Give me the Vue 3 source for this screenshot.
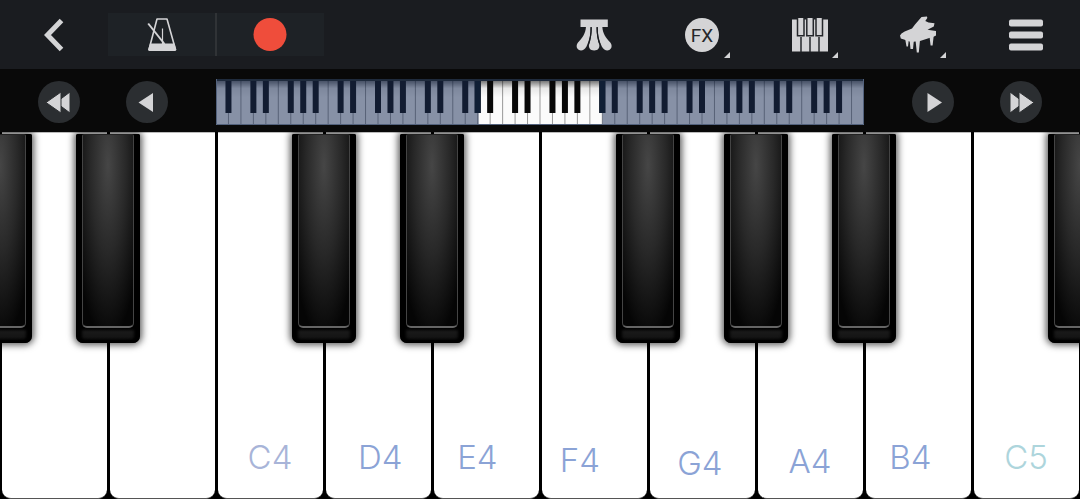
<script setup>
const blackBoundaries = [0, 1, 3, 4, 6, 7, 8, 10]

const noteLabels = [
  { text: 'C4', x: 25, y: 325, tone: 'lilac' },
  { text: 'D4', x: 35.2, y: 325, tone: 'blue' },
  { text: 'E4', x: 44.2, y: 325, tone: 'blue' },
  { text: 'F4', x: 53.7, y: 328, tone: 'blue' },
  { text: 'G4', x: 64.8, y: 331, tone: 'blue' },
  { text: 'A4', x: 75, y: 329, tone: 'blue' },
  { text: 'B4', x: 84.3, y: 325, tone: 'blue' },
  { text: 'C5', x: 95, y: 325, tone: 'mint' },
]

const whiteNames = ['A3', 'B3', 'C4', 'D4', 'E4', 'F4', 'G4', 'A4', 'B4', 'C5']

// Full 88-key overview: 52 white keys starting on A0.
const miniStep = 648 / 52
const boundaries = Array.from({ length: 51 }, (_, i) => i + 1)
const miniLines = boundaries.map((i) => i * miniStep)
const sharps = boundaries
  .filter((i) => i < 51 && [0, 1, 3, 4, 6].includes(i % 7))
  .map((i) => i * miniStep - 3)
const viewStart = 21 * miniStep
const viewEnd = 31 * miniStep
</script>

<template>
  <main class="piano">
    <header class="toolbar">
      <button class="tool" aria-label="Back">
        <svg viewBox="0 0 36 36"><path d="M25.500 3.500 11.500 18l14 14.500" fill="none" stroke="#d4d4d6" stroke-width="5" /></svg>
      </button>
      <div class="group">
        <button class="tool" aria-label="Metronome">
          <svg viewBox="0 0 36 36">
            <path d="M5 32.500 13 2h10l8.500 30.500Z" fill="none" stroke="#d4d4d6" stroke-width="1.600" stroke-linejoin="round" />
            <path d="M6 26.500h24.500l1.800 6.500-1 1H5l-1-1Z" fill="#d4d4d6" />
            <path d="M4.200 6.500 20.500 27" fill="none" stroke="#d4d4d6" stroke-width="2" />
            <path d="M18.500 11.500V27" stroke="#d4d4d6" stroke-width="1.200" />
          </svg>
        </button>
        <button class="tool" aria-label="Record">
          <svg viewBox="0 0 36 36"><circle cx="18" cy="17.500" r="16.500" fill="#ef4d3b" /></svg>
        </button>
      </div>
      <button class="tool pedal" aria-label="Sustain pedal">
        <svg viewBox="0 0 36 36" fill="#d4d4d6">
          <path d="M4.500 2.500h27.300v7.500H4.500Z" />
          <path d="M10 9.500h4.500C14.800 17 13.500 23 10.500 29.500 8.500 33.200 5.500 34 3 33 .3 31.500 0 28 2 25.500 6.500 20.500 9.500 17 10 9.500Z" />
          <path d="M26.300 9.500h-4.500c-.3 7.500 1 13.500 4 20 2 3.700 5 4.500 7.500 3.500 2.700-1.500 3-5 1-7.500-4.500-5-7.500-8.500-8-16Z" />
          <path d="M15.700 9.500h4.900c0 7.500.7 12 2.400 17 1.300 4.200-.8 7-4.850 7s-6.150-2.800-4.850-7C15 21.500 15.700 17 15.700 9.500Z" />
          <path d="M15.200 10.200c0 7-.8 11.800-2.700 17M21.100 10.200c0 7 .8 11.800 2.700 17" fill="none" stroke="#1a1c20" stroke-width="1.200" />
        </svg>
      </button>
      <button class="tool" aria-label="Effects">
        <span class="fx">FX</span><i class="corner"></i>
      </button>
      <button class="tool" aria-label="Keyboard layout">
        <svg viewBox="0 0 36 36">
          <path d="M0 2.500h36v32H0Z" fill="#d4d4d6" />
          <path d="M9 20v15M18 20v15M27 20v15" stroke="#25272b" stroke-width="1.500" />
          <g fill="#d4d4d6" stroke="#25272b" stroke-width="1.500">
            <path d="M5.500 1v17.800h6.500V1M14.800 1v17.800h6.500V1M24 1v17.800h6.500V1" />
          </g>
        </svg><i class="corner"></i>
      </button>
      <button class="tool" aria-label="Instrument">
        <svg viewBox="0 0 36 36" fill="#d4d4d6">
          <path d="M0 18.500 1.500 16.500 4.700 14.500 12 11.500 15 7.500 21.500 0 27 -.5 27.300 1 25.300 4 28.500 5.500 34.500 6.200 33.800 9.500 27.500 12.800 36 14V18.500L34 19.500 20 24 11 25 4.700 22.800 .8 21.500Z" />
          <path d="M5 21h4l-1 8.500H6.500ZM9.500 22h4.500l-1 10h-2.500ZM15.500 23h4.500l-1.200 12.500h-2ZM29.300 18h4.500l-1.200 10.500h-2Z" />
        </svg><i class="corner"></i>
      </button>
      <button class="tool" aria-label="Menu">
        <svg viewBox="0 0 36 36" fill="#d4d4d6">
          <rect x="1" y="2.500" width="34" height="7" rx="2" />
          <rect x="1" y="14.500" width="34" height="7" rx="2" />
          <rect x="1" y="26.500" width="34" height="7" rx="2" />
        </svg>
      </button>
    </header>

    <nav class="range" aria-label="Keyboard range">
      <div class="steps before">
        <button class="step" aria-label="Octave down">
          <svg viewBox="0 0 42 42" fill="#d4d4d6" stroke="#2b2e31" stroke-width="1"><path d="M32 11v21L18 21.500Z" /><path d="M23 11v21L8 21.500Z" /></svg>
        </button>
        <button class="step" aria-label="Key down">
          <svg viewBox="0 0 42 42" fill="#d4d4d6"><path d="M27 12v19L12.500 21.500Z" /></svg>
        </button>
      </div>
      <svg class="overview" viewBox="0 0 648 46" preserveAspectRatio="none" role="img" aria-label="88-key overview">
        <defs>
          <linearGradient id="miniShade" x1="0" y1="0" x2="0" y2="1">
            <stop offset="0" stop-color="#000" stop-opacity=".65" />
            <stop offset=".2" stop-color="#000" stop-opacity=".08" />
            <stop offset=".4" stop-color="#000" stop-opacity="0" />
          </linearGradient>
        </defs>
        <rect width="648" height="46" fill="#fbfbfb" />
        <rect v-for="x in miniLines" :key="'l' + x" :x="x - 0.5" y="0" width="1" height="46" fill="#999" />
        <rect width="648" height="46" fill="url(#miniShade)" />
        <rect v-for="x in sharps" :key="'s' + x" :x="x" y="1" width="6" height="33" fill="#080808" />
        <rect :width="viewStart + 1" height="46" class="veil" />
        <rect :x="viewEnd" :width="648 - viewEnd" height="46" class="veil" />
        <rect :x="viewStart - 3" y="1" width="6" height="33" fill="#101f35" />
        <rect :x="viewEnd - 3" y="1" width="6" height="33" fill="#101f35" />
        <rect width="648" height="2" fill="#1f2b3d" />
        <path d="M.5 0v45.500h647V0" fill="none" stroke="#53627d" />
      </svg>
      <div class="steps">
        <button class="step" aria-label="Key up">
          <svg viewBox="0 0 42 42" fill="#d4d4d6"><path d="M15.500 12v19L30 21.500Z" /></svg>
        </button>
        <button class="step" aria-label="Octave up">
          <svg viewBox="0 0 42 42" fill="#d4d4d6" stroke="#2b2e31" stroke-width="1"><path d="M10 11v21l14-10.500Z" /><path d="M19 11v21l15-10.500Z" /></svg>
        </button>
      </div>
    </nav>

    <section class="keyboard" aria-label="Keys">
      <button v-for="name in whiteNames" :key="name" class="white" :aria-label="name"></button>
      <button
        v-for="b in blackBoundaries"
        :key="b"
        class="black"
        :style="{ left: b * 10 + '%' }"
        aria-label="Black key"
      ><span class="face"></span></button>
      <span
        v-for="n in noteLabels"
        :key="n.text"
        class="note"
        :class="n.tone"
        :style="{ left: n.x + '%', top: n.y + 'px' }"
      >{{ n.text }}</span>
    </section>
  </main>
</template>

<style>
body {
  margin: 0;
  background: #050505;
}
</style>

<style scoped>
.piano {
  display: flex;
  flex-direction: column;
  min-height: 100vh;
  overflow: hidden;
  font-family: Inter, "Liberation Sans", sans-serif;
}
button {
  border: 0;
  padding: 0;
  margin: 0;
  background: none;
  cursor: pointer;
}
.toolbar {
  display: grid;
  grid-template-columns: repeat(10, 1fr);
  height: 69px;
  align-items: center;
  background: #1a1c20;
}
.tool {
  position: relative;
  display: flex;
  align-items: center;
  justify-content: center;
  height: 69px;
}
.tool svg {
  width: 36px;
  height: 36px;
  overflow: visible;
}
.group {
  grid-column: span 2;
  display: grid;
  grid-template-columns: 1fr 1fr;
  background: #1e2226;
}
.group .tool {
  height: 43px;
}
.group .tool + .tool {
  box-shadow: -1px 0 #303336, inset 1px 0 #303336;
}
.pedal {
  grid-column: 6;
}
.fx {
  width: 34px;
  height: 34px;
  border-radius: 50%;
  background: #d4d4d6;
  color: #26282b;
  font: 400 19px/35px Roboto, sans-serif;
  text-align: center;
}
.corner {
  position: absolute;
  right: 26px;
  bottom: 11px;
  width: 6px;
  height: 6px;
  background: #d4d4d6;
  clip-path: polygon(100% 0, 100% 100%, 0 100%);
}
.range {
  display: grid;
  grid-template-columns: minmax(0, 2fr) minmax(0, 6fr) minmax(0, 2fr);
  align-items: center;
  height: 63px;
  padding-top: 2px;
  box-sizing: border-box;
  background: #090909;
}
.steps {
  display: flex;
  gap: 46px;
  padding-left: 48px;
}
.before {
  justify-content: flex-end;
  padding: 0 48px 0 0;
}
.step {
  flex: none;
  width: 42px;
  height: 42px;
  border-radius: 50%;
  background: #2b2e31;
}
.step svg {
  display: block;
  width: 42px;
  height: 42px;
}
.overview {
  display: block;
  width: 100%;
  height: 46px;
}
.veil {
  fill: #1c3058;
  fill-opacity: 0.52;
}
.keyboard {
  position: relative;
  flex: 1;
  display: grid;
  grid-template-columns: repeat(10, 1fr);
  min-height: 367px;
  overflow: hidden;
  background: #000;
}
.white {
  margin: 0 1px 0 2px;
  border-bottom: 1px solid #555;
  border-radius: 0 0 9px 9px;
  background: #fff;
  box-shadow: inset 0 1px #bbb;
}
.black {
  position: absolute;
  top: 2px;
  width: 64px;
  height: 209px;
  margin-left: -32px;
  padding: 0 6px 15px;
  border-radius: 2px 2px 7px 7px;
  background: linear-gradient(#000 0 194px, #191919 198px, #151515 203px, #000 207px);
  box-shadow: inset 6px 0 3px #000, inset -6px 0 3px #000, 0 0 7px 2px rgba(0, 0, 0, 0.65);
}
.face {
  display: block;
  box-sizing: border-box;
  height: 100%;
  border: 1px solid #444;
  border-top-color: #222;
  border-bottom: 2px solid #656565;
  border-radius: 2px 2px 5px 5px;
  background: radial-gradient(ellipse 36px 175px at 50% 16%, #464646, #282828 50%, #050505 100%);
}
.note {
  position: absolute;
  transform: translate(-50%, -50%);
  font-size: 33px;
  font-weight: 300;
  line-height: 40px;
  pointer-events: none;
}
.lilac {
  color: #a8b4d8;
}
.blue {
  color: #8ba3d6;
}
.mint {
  color: #add5dc;
}
</style>
